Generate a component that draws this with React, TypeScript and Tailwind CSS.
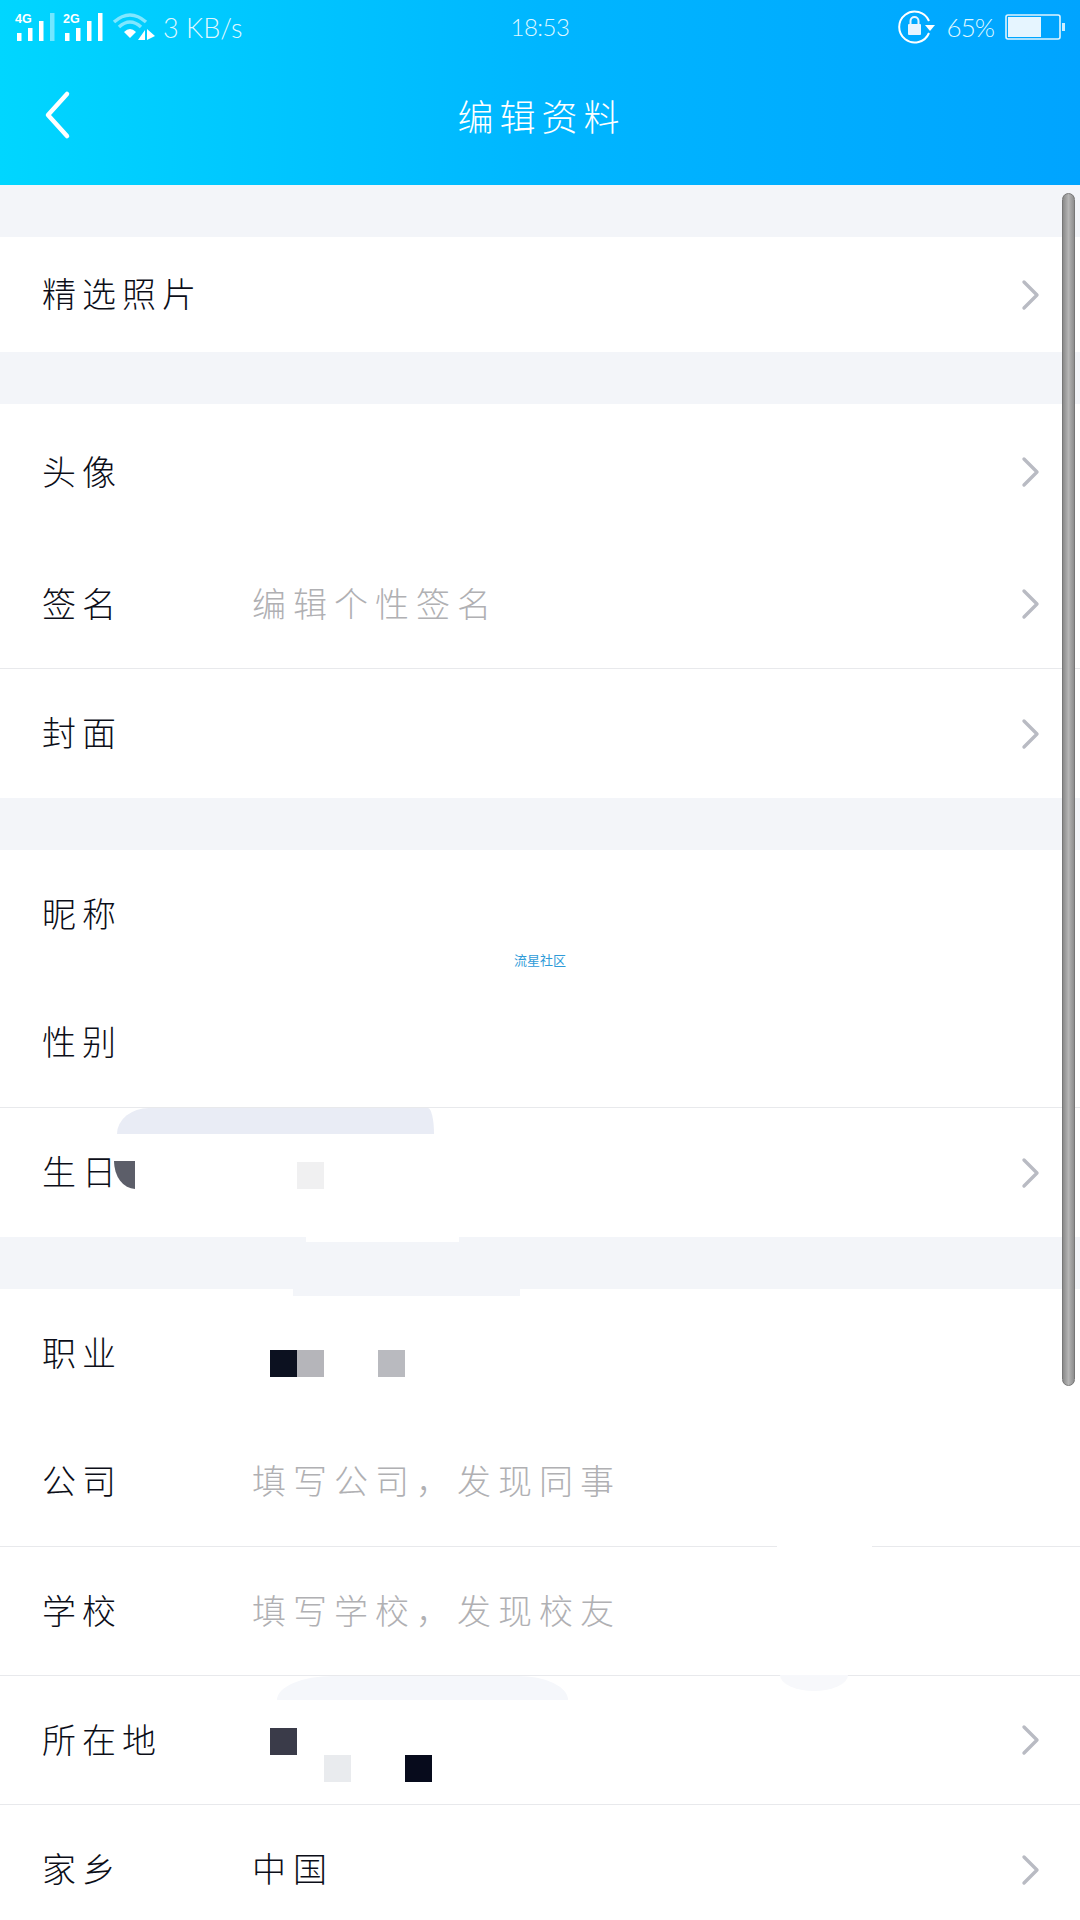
import React from "react";

const cjk = { fontFamily: '"Noto Sans CJK SC", sans-serif' };
const thin = { fontFamily: "Lato, sans-serif", fontWeight: 300 };

function Chevron() {
  return (
    <svg width="20" height="32" viewBox="0 0 20 32" className="shrink-0">
      <path d="M3 3 L16 16 L3 29" fill="none" stroke="#b9bbc3" strokeWidth="3.4" strokeLinecap="round" strokeLinejoin="round" />
    </svg>
  );
}

type Cell = { col: number; row?: number; color: string };

function Mosaic({ cells }: { cells: Cell[] }) {
  return (
    <div className="ml-[18px] grid grid-cols-[repeat(6,27px)] auto-rows-[27px]">
      {cells.map((c, i) => (
        <div key={i} className="w-[27px] h-[27px]" style={{ gridColumnStart: c.col + 1, gridRowStart: (c.row ?? 0) + 1, backgroundColor: c.color }} />
      ))}
    </div>
  );
}

function Row({ label, value, hint, arrow, h, line, cells, cellsPad }: { label: string; value?: string; hint?: string; arrow?: boolean; h: string; line?: boolean; cells?: Cell[]; cellsPad?: string }) {
  return (
    <div className={`flex items-center pl-[42px] pr-[39px] bg-white ${h} ${line ? "border-t border-[#e8e9ec]" : ""}`}>
      <div className="w-[210px] shrink-0 pb-[4px] text-[34px] font-light tracking-[6px] text-[#0c0e18]">{label}</div>
      <div className={`flex-1 pb-[4px] text-[34px] font-light tracking-[7px] ${hint ? "text-[#b0b0b3]" : "text-[#0c0e18]"}`}>
        {cells ? <div className={cellsPad}><Mosaic cells={cells} /></div> : hint ?? value}
      </div>
      {arrow && <Chevron />}
    </div>
  );
}

function Gap() {
  return <div className="h-[52px] bg-[#f3f5f9]" />;
}

function Signal({ label, dim }: { label: string; dim?: boolean }) {
  return (
    <svg width="42" height="28" viewBox="0 0 42 28" className="shrink-0">
      <text x="0" y="10" fontSize="12.5" fontWeight="700" fill="#fff" fontFamily="Liberation Sans, sans-serif">{label}</text>
      <rect x="2" y="20" width="4.5" height="8" fill="#fff" />
      <rect x="13" y="15" width="4.5" height="13" fill="#fff" />
      <rect x="24" y="8" width="4.5" height="20" fill="#fff" />
      <rect x="35" y="0" width="4.5" height="28" fill="#fff" opacity={dim ? 0.45 : 1} />
    </svg>
  );
}

export default function App() {
  return (
    <div className="relative w-[1080px] h-[1920px] overflow-hidden bg-white" style={cjk}>
      <header className="h-[185px] bg-gradient-to-r from-[#00d6ff] via-[#00b6ff] to-[#00a4ff] text-white flex flex-col">
        <div className="h-[54px] grid grid-cols-[1fr_auto_1fr] items-center pl-[15px] pr-[15px]">
          <div className="flex items-center">
            <Signal label="4G" dim />
            <div className="ml-[6px]"><Signal label="2G" /></div>
            <svg width="46" height="30" viewBox="0 0 46 30" className="ml-[7px]">
              <path d="M2 10 Q18 -4 34 10" fill="none" stroke="#fff" strokeOpacity="0.5" strokeWidth="3.5" />
              <path d="M7 15 Q18 5 29 15" fill="none" stroke="#fff" strokeOpacity="0.5" strokeWidth="3.5" />
              <path d="M12 20 Q18 14 24 20 L18 26 Z" fill="#fff" />
              <path d="M26 28 L33 18 V28 Z M35 17 V28 L43 24 Z" fill="#fff" />
            </svg>
            <span className="ml-[5px] text-[27px] leading-none text-[#dff7ff]" style={thin}>3 KB/s</span>
          </div>
          <span className="text-[24px] leading-none tracking-[-0.5px] text-[#dff7ff]" style={thin}>18:53</span>
          <div className="flex items-center justify-end gap-[11px]">
            <svg width="38" height="34" viewBox="0 0 38 34">
              <path d="M31 11 A15.5 15.5 0 1 0 31 23" fill="none" stroke="#fff" strokeWidth="2" />
              <path d="M27 15 H37 L32 21 Z" fill="#fff" />
              <rect x="10" y="14" width="13" height="11" rx="1" fill="#e8f4ff" />
              <path d="M12.5 14 V11 A4 4 0 0 1 20.5 11 V14" fill="none" stroke="#e8f4ff" strokeWidth="2" />
            </svg>
            <span className="text-[26px] leading-none tracking-[-1px] text-[#dff7ff]" style={thin}>65%</span>
            <svg width="60" height="26" viewBox="0 0 60 26">
              <rect x="1" y="1" width="54" height="24" rx="2" fill="none" stroke="#dff4ff" strokeWidth="1.6" />
              <rect x="3" y="3" width="33" height="20" fill="#e6f5ff" />
              <rect x="57" y="9" width="3" height="8" fill="#cdeeff" />
            </svg>
          </div>
        </div>
        <div className="flex-1 grid grid-cols-[1fr_auto_1fr] items-center pb-[10px] pl-[43px]">
          <svg width="28" height="50" viewBox="0 0 28 50">
            <path d="M24 4 L5 25 L24 46" fill="none" stroke="#fff" strokeWidth="4.5" strokeLinecap="round" strokeLinejoin="round" />
          </svg>
          <span className="-ml-[40px] text-[36px] font-light tracking-[6px]">编辑资料</span>
          <div />
        </div>
      </header>

      <Gap />
      <Row label="精选照片" arrow h="h-[115px]" />
      <Gap />
      <Row label="头像" arrow h="h-[136px]" />
      <Row label="签名" hint="编辑个性签名" arrow h="h-[128px]" />
      <Row label="封面" arrow h="h-[130px]" line />
      <Gap />
      <Row label="昵称" h="h-[128px]" />
      <Row label="性别" h="h-[129px]" />
      <Row label="生日" arrow h="h-[130px]" line cells={[{ col: 1, color: "#f0f0f1" }]} cellsPad="pt-[9px]" />
      <Gap />
      <Row label="职业" h="h-[128px]" cells={[{ col: 0, color: "#0c1120" }, { col: 1, color: "#b5b5ba" }, { col: 4, color: "#b9babf" }]} cellsPad="pt-[24px]" />
      <Row label="公司" hint="填写公司，发现同事" h="h-[129px]" />
      <Row label="学校" hint="填写学校，发现校友" h="h-[129px]" line />
      <Row label="所在地" arrow h="h-[129px]" line cells={[{ col: 0, row: 0, color: "#3a3b49" }, { col: 2, row: 1, color: "#e9ebee" }, { col: 5, row: 1, color: "#070b1c" }]} cellsPad="pt-[34px]" />
      <Row label="家乡" value="中国" arrow h="h-[130px]" line />

      {/* scrollbar */}
      <div className="absolute left-[1062px] top-[193px] w-[13px] h-[1193px] rounded-full border border-[#777] bg-gradient-to-r from-[#8a8a8a] via-[#b5b5b5] to-[#8e8e8e]" />

      {/* watermark */}
      <span className="absolute left-[514px] top-[951px] text-[13px] leading-[18px] text-[#2f9bd8]">流星社区</span>

      {/* retouched patches lying over the list */}
      <div className="absolute left-[117px] top-[1108px] w-[317px] h-[26px] rounded-tl-[32px_26px] rounded-tr-[6px_26px] bg-[#e9ecf5]" />
      <div className="absolute left-[114px] top-[1161px] w-[21px] h-[28px] rounded-bl-[21px_28px] bg-[#5c5e69]" />
      <div className="absolute left-[306px] top-[1237px] w-[153px] h-[5px] bg-white" />
      <div className="absolute left-[293px] top-[1289px] w-[227px] h-[7px] bg-[#f3f5f9]" />
      <div className="absolute left-[777px] top-[1546px] w-[95px] h-[2px] bg-white" />
      <div className="absolute left-[780px] top-[1675px] w-[68px] h-[16px] rounded-b-[34px_16px] bg-[#f7f8fb]" />
      <div className="absolute left-[277px] top-[1676px] w-[291px] h-[24px] rounded-tl-[56px_24px] rounded-tr-[50px_24px] bg-[#f5f7fb]" />
    </div>
  );
}
